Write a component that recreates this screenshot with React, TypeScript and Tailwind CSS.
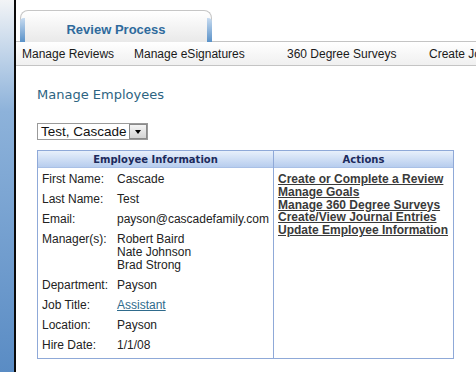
export default function App() {
  const rows: { label: string; value: React.ReactNode }[] = [
    { label: "First Name:", value: "Cascade" },
    { label: "Last Name:", value: "Test" },
    { label: "Email:", value: "payson@cascadefamily.com" },
    {
      label: "Manager(s):",
      value: (
        <div className="flex flex-col">
          <span>Robert Baird</span>
          <span>Nate Johnson</span>
          <span>Brad Strong</span>
        </div>
      ),
    },
    { label: "Department:", value: "Payson" },
    {
      label: "Job Title:",
      value: <a className="text-[#2f6b8c] underline" href="#">Assistant</a>,
    },
    { label: "Location:", value: "Payson" },
    { label: "Hire Date:", value: "1/1/08" },
  ];
  const actions = [
    "Create or Complete a Review",
    "Manage Goals",
    "Manage 360 Degree Surveys",
    "Create/View Journal Entries",
    "Update Employee Information",
  ];
  return (
    <div
      className="flex w-[476px] h-[372px] overflow-hidden bg-white text-[#222]"
      style={{ fontFamily: '"Liberation Sans", Arial, sans-serif' }}
    >
      <div className="w-[14px] h-full shrink-0 bg-gradient-to-b from-[#f2f4f6] via-[#8db2da] via-30% to-[#5a8cc4]" />
      <div className="w-[2px] h-full shrink-0 bg-[#0a0a0a]" />
      <div className="flex-1 flex flex-col min-w-0">
        {/* tab row */}
        <div className="h-[41px] pt-[10px] pl-[4px] flex">
          <div className="relative z-10 w-[192px] h-[32px] rounded-t-[8px] border border-b-0 border-[#c6c6c6] bg-gradient-to-b from-white to-[#e9e9e9] text-center">
            <div className="absolute left-[-1px] top-[7px] bottom-0 w-[5px] rounded-tl-[4px] bg-gradient-to-b from-[#c6daef] to-[#5a92c8]" />
            <div className="absolute right-[-1px] top-[7px] bottom-0 w-[5px] rounded-tr-[4px] bg-gradient-to-b from-[#c6daef] to-[#5a92c8]" />
            <div className="pt-[11px] leading-[16px] text-[13px] font-bold text-[#2e6a9c]">
              Review Process
            </div>
          </div>
        </div>
        {/* nav */}
        <div className="h-[25px] border-y border-[#c4c4c4] bg-gradient-to-b from-white to-[#f0f0f0] flex items-center pl-[6px] text-[12px] text-[#1a1a1a] whitespace-nowrap overflow-hidden">
          <span className="w-[112px] shrink-0">Manage Reviews</span>
          <span className="w-[153px] shrink-0">Manage eSignatures</span>
          <span className="w-[142px] shrink-0">360 Degree Surveys</span>
          <span className="shrink-0">Create Journal Entries</span>
        </div>
        {/* content */}
        <div className="pl-[21px] flex flex-col">
          <div
            className="mt-[20px] h-[18px] leading-[18px] text-[#2d6482]"
            style={{ fontFamily: '"DejaVu Sans", Tahoma, sans-serif', fontSize: "13px" }}
          >
            Manage Employees
          </div>
          <div className="mt-[19px] w-[111px] h-[17px] border border-[#9a9a9a] flex items-center whitespace-nowrap">
            <span className="flex-1 min-w-0 pl-[3px] text-[13.5px] leading-[15px] text-[#111]">Test, Cascade</span>
            <div className="w-[18px] h-[15px] shrink-0 border border-[#8a8a8a] bg-gradient-to-b from-[#f4f4f4] to-[#d4d4d4] flex items-center justify-center">
              <div className="w-0 h-0 border-l-[3.5px] border-r-[3.5px] border-t-[4px] border-l-transparent border-r-transparent border-t-black" />
            </div>
          </div>
          {/* table */}
          <div className="mt-[10px] w-[417px] h-[209px] border border-[#8fa9d8] flex">
            <div className="w-[236px] border-r border-[#8fa9d8] flex flex-col">
              <div
                className="h-[17px] bg-gradient-to-b from-[#e8f0fb] to-[#b7cdee] border-b border-[#a9c0e6] flex items-center justify-center text-[10px] font-bold text-[#1b2a5c]"
                style={{ fontFamily: '"DejaVu Sans", Verdana, sans-serif' }}
              >
                Employee Information
              </div>
              <div className="pt-[5px] pl-[4px] flex flex-col gap-[7px] text-[12px] leading-[13px]">
                {rows.map((r) => (
                  <div key={r.label} className="flex">
                    <span className="w-[75px] shrink-0">{r.label}</span>
                    <div>{r.value}</div>
                  </div>
                ))}
              </div>
            </div>
            <div className="flex-1 flex flex-col">
              <div
                className="h-[17px] bg-gradient-to-b from-[#e8f0fb] to-[#b7cdee] border-b border-[#a9c0e6] flex items-center justify-center text-[10px] font-bold text-[#1b2a5c]"
                style={{ fontFamily: '"DejaVu Sans", Verdana, sans-serif' }}
              >
                Actions
              </div>
              <div className="pt-[5px] pl-[4px] flex flex-col text-[12px] leading-[12.75px] font-bold text-[#3a3a3a] whitespace-nowrap">
                {actions.map((a) => (
                  <a key={a} href="#" className="underline">
                    {a}
                  </a>
                ))}
              </div>
            </div>
          </div>
        </div>
      </div>
    </div>
  );
}
